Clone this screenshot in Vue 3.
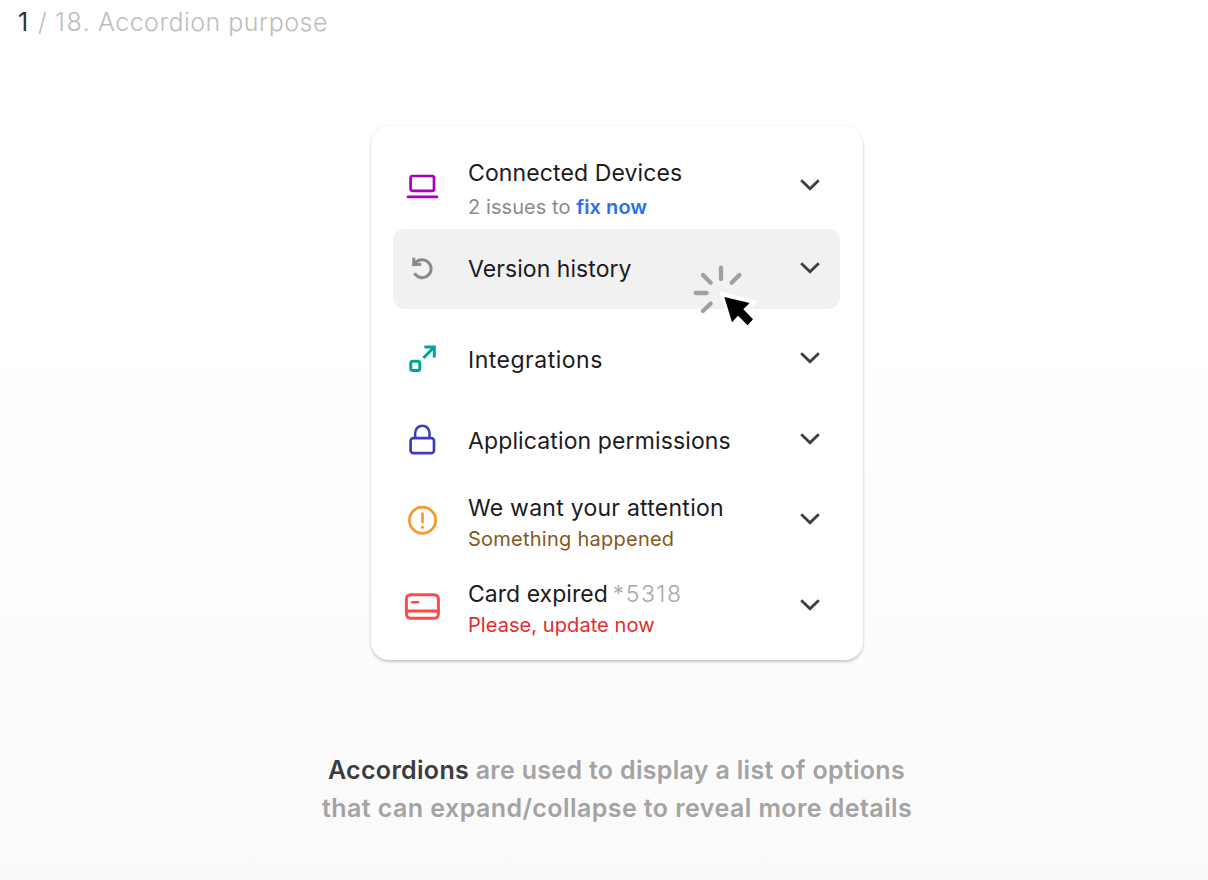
<script setup>
const rows = [
  { id: 'devices', title: 'Connected Devices', sub: '2 issues to ', link: 'fix now' },
  { id: 'history', title: 'Version history' },
  { id: 'integrations', title: 'Integrations' },
  { id: 'permissions', title: 'Application permissions' },
  { id: 'attention', title: 'We want your attention', sub: 'Something happened' },
  { id: 'card', title: 'Card expired', extra: '*5318', sub: 'Please, update now' },
]
</script>

<template>
  <main class="page">
    <header class="heading"><span class="current">1</span><span class="slash">/</span><span class="total">18.</span><span class="name">Accordion purpose</span></header>

    <section class="panel">
      <div v-for="row in rows" :key="row.id" class="row" :class="row.id">
        <svg class="icon" viewBox="0 0 36 36" fill="none" stroke="currentColor" stroke-width="2.7">
          <g v-if="row.id === 'devices'">
            <rect x="6.6" y="8" width="23.4" height="14.9" rx="1.8" />
            <path d="M4 28.8H33" stroke-linecap="round" />
          </g>
          <g v-else-if="row.id === 'history'">
            <path d="M10.5 22.2A8.9 8.9 0 1 0 11.2 12.2L10.4 13.2" stroke-width="3" />
            <path d="M9.9 6.6L9.6 13.7L17.2 13.3" stroke-width="2.9" />
            <path d="M9.6 8L15.5 13.4L10 14Z" fill="currentColor" stroke="none" />
          </g>
          <g v-else-if="row.id === 'integrations'" stroke-width="3">
            <rect x="6.8" y="20.2" width="9" height="9.3" rx="2" />
            <path d="M20.4 5.9H30.3V16.4M30 6.2L19.4 17" />
          </g>
          <g v-else-if="row.id === 'permissions'">
            <rect x="6.6" y="16.2" width="23.4" height="15" rx="2.8" />
            <path d="M11.2 16V10.8A7.15 7.15 0 0 1 25.5 10.8V16" stroke-width="2.5" />
          </g>
          <g v-else-if="row.id === 'attention'">
            <circle cx="18.5" cy="18.2" r="13.1" />
            <path d="M18.5 11.6V20" stroke-linecap="round" />
            <circle cx="18.5" cy="25.3" r="1.6" fill="currentColor" stroke="none" />
          </g>
          <g v-else>
            <rect x="2.4" y="6.7" width="32" height="23.6" rx="4.2" stroke-width="3" />
            <path d="M2.4 23H34.4" stroke-width="2.8" />
            <path d="M8.2 14.3H14" stroke-linecap="round" stroke-width="2.5" />
          </g>
        </svg>
        <div class="copy">
          <div class="title"><span class="label">{{ row.title }}</span><span v-if="row.extra" class="extra">{{ row.extra }}</span></div>
          <div v-if="row.sub" class="sub">{{ row.sub }}<a v-if="row.link" class="link">{{ row.link }}</a></div>
        </div>
        <svg class="chevron" viewBox="0 0 20 12" fill="none" stroke="#3e3e40" stroke-width="2.8">
          <path d="M1.2 1.2L10 9.8L18.8 1.2" />
        </svg>
      </div>
      <svg class="cursor" viewBox="0 0 300 270">
        <path d="M123 53V87M69 75L92 98M178 75L155 98M47 129H80M92 161L69 183" fill="none" stroke="#a0a0a0" stroke-width="13" stroke-linecap="round" />
        <path d="M117 122L232 154L205 180L230 208L203 238L175 210L150 232Z" fill="#fff" />
        <path d="M133 141L209 159L190 178L219 208L203 226L174 197L156 217Z" fill="#000" />
      </svg>
    </section>

    <p class="caption">
      <span class="line one"><b>Accordions</b> are used to display a list of options</span>
      <span class="line two">that can expand/collapse to reveal more details</span>
    </p>
  </main>
</template>

<style>
body { margin: 0; }
</style>

<style scoped>
.page {
  box-sizing: border-box;
  width: 1208px;
  height: 880px;
  overflow: hidden;
  display: flex;
  flex-direction: column;
  background: linear-gradient(#fff 0, #fff 300px, #fafafa 880px);
  font-family: Inter, "Liberation Sans", sans-serif;
  color: #1b1b1d;
}
.heading {
  height: 44px;
  line-height: 44px;
  padding-left: 18px;
  display: flex;
  font-size: 25px;
  font-weight: 300;
  color: #bdbdbd;
}
.current { color: #303030; font-weight: 400; width: 20px; }
.slash { width: 17px; }
.total { width: 43px; letter-spacing: 1.6px; }
.name { letter-spacing: 0.48px; }
.panel {
  position: relative;
  box-sizing: border-box;
  width: 492px;
  height: 534px;
  margin: 82px 0 0 371px;
  padding: 17px 23px 0 22px;
  border-radius: 18px;
  background: #fff;
  box-shadow: 0 2px 3px rgba(0, 0, 0, 0.2), 0 0 3px rgba(0, 0, 0, 0.06);
}
.row {
  box-sizing: border-box;
  height: 80px;
  padding: 0 20px 0 11px;
  display: flex;
  align-items: center;
  border-radius: 12px;
}
.row.devices { height: 86px; color: #a800c2; }
.row.history { background: #f1f1f1; color: #8a8a8a; }
.row.integrations { margin-top: 10px; color: #00a693; }
.row.permissions { margin-top: 1px; color: #3d3dbb; }
.row.attention { color: #f29a2e; }
.row.card { margin-top: 6px; color: #ff4a4a; }
.icon { width: 36px; height: 36px; flex: none; }
.copy { flex: 1; padding-top: 2px; margin-left: 28px; white-space: nowrap; }
.devices .copy { padding-top: 7px; }
.history .copy { padding-top: 0; }
.attention .copy, .card .copy { padding-top: 7px; }
.chevron { width: 20px; height: 12px; flex: none; margin-bottom: 2px; }
.title {
  height: 30px;
  line-height: 30px;
  font-size: 23px;
  font-weight: 400;
  letter-spacing: 0.12px;
}
.history .title { letter-spacing: 0.06px; }
.integrations .title { letter-spacing: 0.5px; }
.attention .title { letter-spacing: 0.25px; }
.card .title { letter-spacing: 0.03px; }
.card .extra { margin-left: 5px; color: #a6a6a6; font-weight: 300; letter-spacing: 1.5px; }
.label { color: #1b1b1d; }
.sub {
  height: 30px;
  line-height: 30px;
  margin-top: 1px;
  font-size: 20px;
  letter-spacing: 0.07px;
  color: #8b8b8b;
}
.devices .sub { margin-top: 4px; }
.attention .sub { color: #87571a; letter-spacing: 0.25px; }
.card .sub { color: #e52b2b; }
.link { color: #2b6ff0; font-weight: 600; }
.cursor { position: absolute; left: 309px; top: 124px; width: 100px; height: 90px; }
.caption {
  margin: 91px 0 0;
  font-size: 25px;
  font-weight: 600;
  color: #a3a3a3;
}
.line { display: block; height: 38px; line-height: 38px; white-space: nowrap; }
.one { padding-left: 328px; letter-spacing: 0.31px; }
.two { padding-left: 322px; letter-spacing: 0.43px; }
b { color: #3c3c3e; font-weight: 600; }
</style>
